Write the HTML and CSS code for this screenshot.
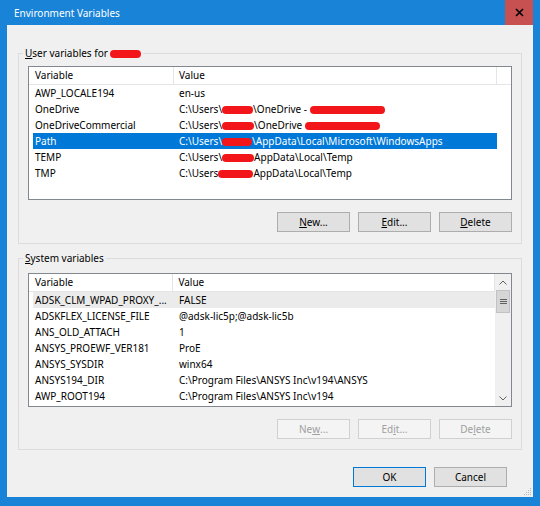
FILE: index.html
```html
<!DOCTYPE html>
<html>
<head>
<meta charset="utf-8">
<link rel="stylesheet" href="styles.css">
</head>
<body>
<div class="window">
  <div class="titlebar">
    <div class="title">Environment Variables</div>
    <div class="close">
      <svg width="9" height="9" viewBox="0 0 9 9"><path d="M1 1L8 8M8 1L1 8" stroke="#000" stroke-width="1.6"/></svg>
    </div>
  </div>
  <div class="client">
    <fieldset class="group g1">
      <legend><u>U</u>ser variables for <span class="red r31"></span></legend>
      <div class="listbox">
        <div class="lv-main">
          <div class="lv-head">
            <div class="h1">Variable</div>
            <div class="h2">Value</div>
          </div>
          <div class="row"><div class="c1">AWP_LOCALE194</div><div class="c2">en-us</div></div>
          <div class="row"><div class="c1">OneDrive</div><div class="c2">C:\Users\<span class="red r31"></span>\OneDrive - <span class="red r75"></span></div></div>
          <div class="row"><div class="c1">OneDriveCommercial</div><div class="c2">C:\Users\<span class="red r32"></span>\OneDrive <span class="red r75"></span></div></div>
          <div class="row sel"><div class="c1">Path</div><div class="c2">C:\Users\<span class="red r30"></span>\AppData\Local\Microsoft\WindowsApps</div></div>
          <div class="row"><div class="c1">TEMP</div><div class="c2">C:\Users\<span class="red r32"></span>AppData\Local\Temp</div></div>
          <div class="row"><div class="c1">TMP</div><div class="c2">C:\Users<span class="red r35"></span>AppData\Local\Temp</div></div>
        </div>
      </div>
      <div class="btnrow">
        <button class="btn"><u>N</u>ew...</button>
        <button class="btn"><u>E</u>dit...</button>
        <button class="btn"><u>D</u>elete</button>
      </div>
    </fieldset>

    <fieldset class="group g2">
      <legend><u>S</u>ystem variables</legend>
      <div class="listbox">
        <div class="lv-main">
          <div class="lv-head">
            <div class="h1">Variable</div>
            <div class="h2">Value</div>
          </div>
          <div class="row hot"><div class="c1">ADSK_CLM_WPAD_PROXY_...</div><div class="c2">FALSE</div></div>
          <div class="row"><div class="c1">ADSKFLEX_LICENSE_FILE</div><div class="c2">@adsk-lic5p;@adsk-lic5b</div></div>
          <div class="row"><div class="c1">ANS_OLD_ATTACH</div><div class="c2">1</div></div>
          <div class="row"><div class="c1">ANSYS_PROEWF_VER181</div><div class="c2">ProE</div></div>
          <div class="row"><div class="c1">ANSYS_SYSDIR</div><div class="c2">winx64</div></div>
          <div class="row"><div class="c1">ANSYS194_DIR</div><div class="c2">C:\Program Files\ANSYS Inc\v194\ANSYS</div></div>
          <div class="row"><div class="c1">AWP_ROOT194</div><div class="c2">C:\Program Files\ANSYS Inc\v194</div></div>
        </div>
        <div class="vscroll">
          <div class="arrow">
            <svg width="8" height="5" viewBox="0 0 8 5"><polyline points="0.5,4.5 4,1 7.5,4.5" fill="none" stroke="#606060" stroke-width="1"/></svg>
          </div>
          <div class="track">
            <div class="thumb">
              <svg width="7" height="7" viewBox="0 0 7 7"><path d="M0 1.5H7M0 3.5H7M0 5.5H7" stroke="#606060" stroke-width="1"/></svg>
            </div>
          </div>
          <div class="arrow">
            <svg width="8" height="5" viewBox="0 0 8 5"><polyline points="0.5,0.5 4,4 7.5,0.5" fill="none" stroke="#606060" stroke-width="1"/></svg>
          </div>
        </div>
      </div>
      <div class="btnrow">
        <button class="btn dis">Ne<u>w</u>...</button>
        <button class="btn dis">Ed<u>i</u>t...</button>
        <button class="btn dis">De<u>l</u>ete</button>
      </div>
    </fieldset>

    <div class="dlgrow">
      <button class="btn def">OK</button>
      <button class="btn">Cancel</button>
    </div>

    <svg class="grip" width="10" height="10" viewBox="0 0 10 10">
      <rect x="8" y="2" width="1" height="1" fill="#b8b8b8"/>
      <rect x="6" y="4" width="1" height="1" fill="#b8b8b8"/>
      <rect x="8" y="4" width="1" height="1" fill="#b8b8b8"/>
      <rect x="4" y="6" width="1" height="1" fill="#b8b8b8"/>
      <rect x="6" y="6" width="1" height="1" fill="#b8b8b8"/>
      <rect x="8" y="6" width="1" height="1" fill="#b8b8b8"/>
      <rect x="2" y="8" width="1" height="1" fill="#b8b8b8"/>
      <rect x="4" y="8" width="1" height="1" fill="#b8b8b8"/>
      <rect x="6" y="8" width="1" height="1" fill="#b8b8b8"/>
      <rect x="8" y="8" width="1" height="1" fill="#b8b8b8"/>
    </svg>
  </div>
</div>
</body>
</html>
```
FILE: styles.css
```css
* { box-sizing: border-box; }

body {
  margin: 0;
  font-family: "Noto Sans", "Open Sans", sans-serif;
  font-size: 10px;
  color: #000;
}

.window {
  width: 540px;
  height: 506px;
  background: #1883d7;
  display: flex;
  flex-direction: column;
}

.titlebar {
  height: 25px;
  display: flex;
  align-items: center;
  flex-shrink: 0;
}

.title {
  flex: 1;
  color: #fff;
  padding-left: 14px;
  font-size: 10px;
}

.close {
  width: 28px;
  height: 25px;
  margin-right: 7px;
  background: #c75050;
  display: flex;
  align-items: center;
  justify-content: center;
}

.client {
  flex: 1;
  margin: 0 7px 9px;
  background: #f0f0f0;
  padding: 20px 11px 0;
  display: flex;
  flex-direction: column;
  position: relative;
}

.group {
  border: 1px solid #dcdcdc;
  margin: 0;
  padding: 5px 9px 11px;
  min-width: 0;
}

.g2 {
  margin-top: 6px;
  padding-top: 7px;
  padding-bottom: 10px;
}

legend {
  padding: 0 2px;
  margin-left: -5px;
  line-height: 16px;
  height: 16px;
}

.red {
  display: inline-block;
  height: 8px;
  background: #f2161a;
  border-radius: 4px;
  vertical-align: middle;
}
.r30 { width: 30px; }
.r31 { width: 31px; }
.r32 { width: 32px; }
.r35 { width: 35px; }
.r75 { width: 75px; }

.listbox {
  height: 134px;
  border: 1px solid #828790;
  background: #fff;
  display: flex;
  overflow: hidden;
}

.lv-main {
  flex: 1;
  min-width: 0;
  overflow: hidden;
}

.lv-head {
  display: flex;
  height: 18px;
  border-bottom: 1px solid #e5e5e5;
  line-height: 17px;
}

.h1 {
  width: 145px;
  padding-left: 6px;
  border-right: 1px solid #e5e5e5;
}

.h2 {
  width: 323px;
  padding-left: 5px;
  border-right: 1px solid #e5e5e5;
}

.row {
  display: flex;
  height: 16px;
  line-height: 16px;
  margin-left: 4px;
  width: 464px;
  white-space: nowrap;
}

.c1 {
  width: 140px;
  padding-left: 2px;
  overflow: hidden;
  flex-shrink: 0;
}

.c2 {
  flex: 1;
  padding-left: 6px;
  overflow: hidden;
}

.row.sel {
  background: #0078d7;
  color: #fff;
}

.row.hot {
  background: #ebebeb;
}

.vscroll {
  width: 16px;
  flex-shrink: 0;
  background: #f0f0f0;
  display: flex;
  flex-direction: column;
}

.arrow {
  height: 16px;
  display: flex;
  align-items: center;
  justify-content: center;
}

.track {
  flex: 1;
}

.thumb {
  height: 23px;
  margin: 0 1px;
  background: #d6d6d6;
  border: 1px solid #c2c2c2;
  display: flex;
  align-items: center;
  justify-content: center;
}

.btnrow {
  display: flex;
  justify-content: flex-end;
  gap: 8px;
  margin-top: 12px;
}

.btn {
  width: 73px;
  height: 20px;
  padding: 0;
  border: 1px solid #adadad;
  background: #e1e1e1;
  font-family: inherit;
  font-size: 10px;
  color: #000;
  display: flex;
  align-items: center;
  justify-content: center;
}

.btn.dis {
  color: #a0a0a0;
  border-color: #d0d0d0;
  background: #f4f4f4;
}

.btn.def {
  border-color: #0078d7;
}

.dlgrow {
  display: flex;
  justify-content: flex-end;
  gap: 8px;
  margin-top: 17px;
  margin-right: 15px;
}

.grip {
  position: absolute;
  right: 1px;
  bottom: 1px;
}
```
